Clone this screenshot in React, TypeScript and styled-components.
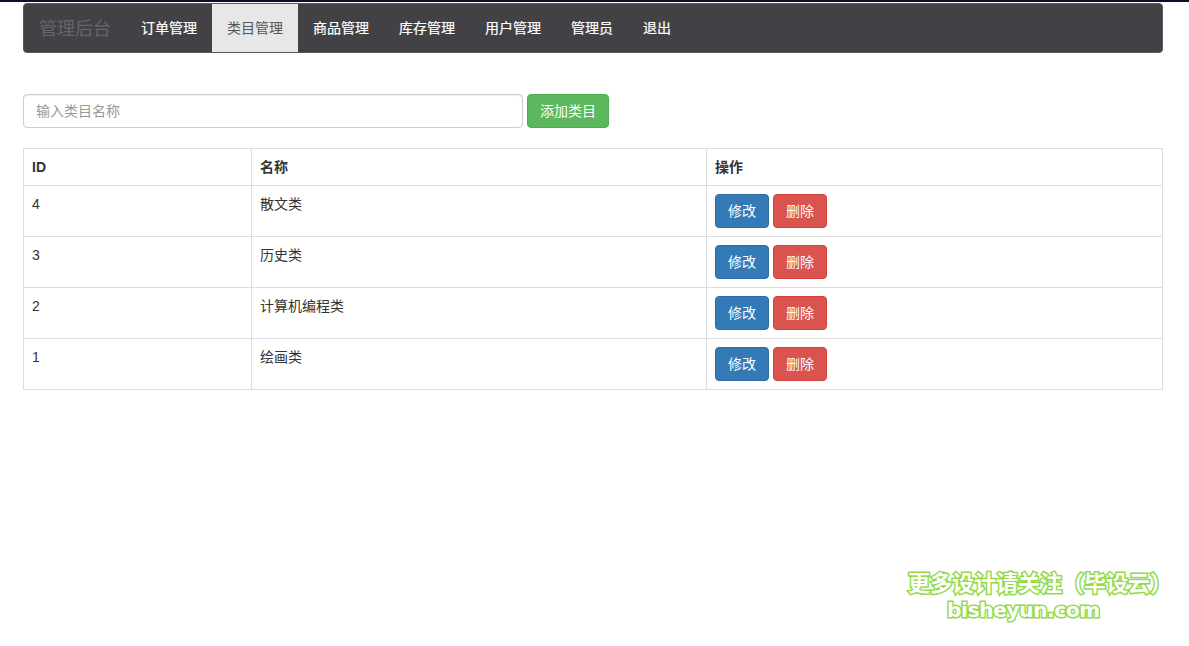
import React from "react";
import styled, { createGlobalStyle } from "styled-components";

const Global = createGlobalStyle`
  html, body { margin: 0; padding: 0; background: #fff; }
  body {
    font-family: "Liberation Sans", "Noto Sans CJK SC", sans-serif;
    font-size: 14px;
    line-height: 20px;
    color: #333;
  }
`;

const Page = styled.div`
  position: relative;
  height: 646px;
  overflow: hidden;
  border-top: 2px solid #0a1028;
  box-sizing: border-box;
`;

const Container = styled.div`
  padding: 1px 26px 0 23px;
`;

const Navbar = styled.nav`
  display: flex;
  height: 50px;
  background: #424145;
  border-radius: 4px;
  border: 1px solid #59585c;
  box-sizing: border-box;
  margin-bottom: 41px;
  overflow: hidden;
`;

const Brand = styled.span`
  padding: 0 15px;
  font-size: 18px;
  line-height: 50px;
  color: #666;
`;

const NavLink = styled.a<{ $active?: boolean }>`
  padding: 0 15px;
  line-height: 50px;
  margin: -1px 0;
  height: 50px;
  color: ${(p) => (p.$active ? "#555" : "#fff")};
  background: ${(p) => (p.$active ? "#e7e7e7" : "transparent")};
  -webkit-text-stroke: ${(p) => (p.$active ? "0" : "0.2px #fff")};
`;

const SearchForm = styled.form`
  display: flex;
  gap: 4px;
  margin-bottom: 20px;
`;

const SearchInput = styled.input`
  width: 500px;
  height: 34px;
  box-sizing: border-box;
  padding: 6px 12px;
  font: inherit;
  color: #555;
  border: 1px solid #ccc;
  border-radius: 4px;
  box-shadow: inset 0 1px 1px rgba(0, 0, 0, 0.075);
  outline: none;
  &::placeholder { color: #999; opacity: 1; }
`;

const palette = {
  green: ["#5cb85c", "#4cae4c"],
  blue: ["#337ab7", "#2e6da4"],
  red: ["#d9534f", "#d43f3a"],
};

const Button = styled.button<{ $tone: keyof typeof palette }>`
  height: 34px;
  box-sizing: border-box;
  padding: 6px 12px;
  font: inherit;
  color: #fff;
  background: ${(p) => palette[p.$tone][0]};
  border: 1px solid ${(p) => palette[p.$tone][1]};
  border-radius: 4px;
`;

const Table = styled.table`
  width: 100%;
  table-layout: fixed;
  border-collapse: collapse;
  border: 1px solid #ddd;
`;

const Th = styled.th<{ $w?: number }>`
  box-sizing: border-box;
  width: ${(p) => (p.$w ? `${p.$w}px` : "auto")};
  padding: 8px;
  text-align: left;
  font-weight: 700;
  border: 1px solid #ddd;
`;

const Td = styled.td`
  padding: 8px;
  vertical-align: top;
  height: 34px;
  border: 1px solid #ddd;
`;

const Actions = styled.div`
  display: flex;
  gap: 4px;
`;

const Watermark = styled.div`
  position: absolute;
  right: 25px;
  top: 564px;
  width: 256px;
  text-align: center;
  font-family: "Noto Sans CJK SC", sans-serif;
  font-weight: 700;
  color: #fff;
  -webkit-text-stroke: 3px #93d94a;
  paint-order: stroke fill;
`;

const WaterLine = styled.div`
  font-size: 22px;
  line-height: 30px;
  white-space: nowrap;
`;

const WaterSite = styled.div`
  font-family: "DejaVu Sans", sans-serif;
  font-size: 20px;
  line-height: 24px;
  letter-spacing: -0.3px;
  padding-right: 25px;
  margin-top: 2px;
`;

const navItems = ["订单管理", "类目管理", "商品管理", "库存管理", "用户管理", "管理员", "退出"];
const rows = [
  { id: 4, name: "散文类" },
  { id: 3, name: "历史类" },
  { id: 2, name: "计算机编程类" },
  { id: 1, name: "绘画类" },
];

export default function App() {
  return (
    <Page>
      <Global />
      <Container>
        <Navbar>
          <Brand>管理后台</Brand>
          {navItems.map((n) => (
            <NavLink key={n} $active={n === "类目管理"}>{n}</NavLink>
          ))}
        </Navbar>
        <SearchForm>
          <SearchInput placeholder="输入类目名称" />
          <Button type="button" $tone="green">添加类目</Button>
        </SearchForm>
        <Table>
          <thead>
            <tr>
              <Th $w={228}>ID</Th>
              <Th $w={455}>名称</Th>
              <Th>操作</Th>
            </tr>
          </thead>
          <tbody>
            {rows.map((r) => (
              <tr key={r.id}>
                <Td>{r.id}</Td>
                <Td>{r.name}</Td>
                <Td>
                  <Actions>
                    <Button type="button" $tone="blue">修改</Button>
                    <Button type="button" $tone="red">删除</Button>
                  </Actions>
                </Td>
              </tr>
            ))}
          </tbody>
        </Table>
      </Container>
      <Watermark>
        <WaterLine>更多设计请关注（毕设云）</WaterLine>
        <WaterSite>bisheyun.com</WaterSite>
      </Watermark>
    </Page>
  );
}
